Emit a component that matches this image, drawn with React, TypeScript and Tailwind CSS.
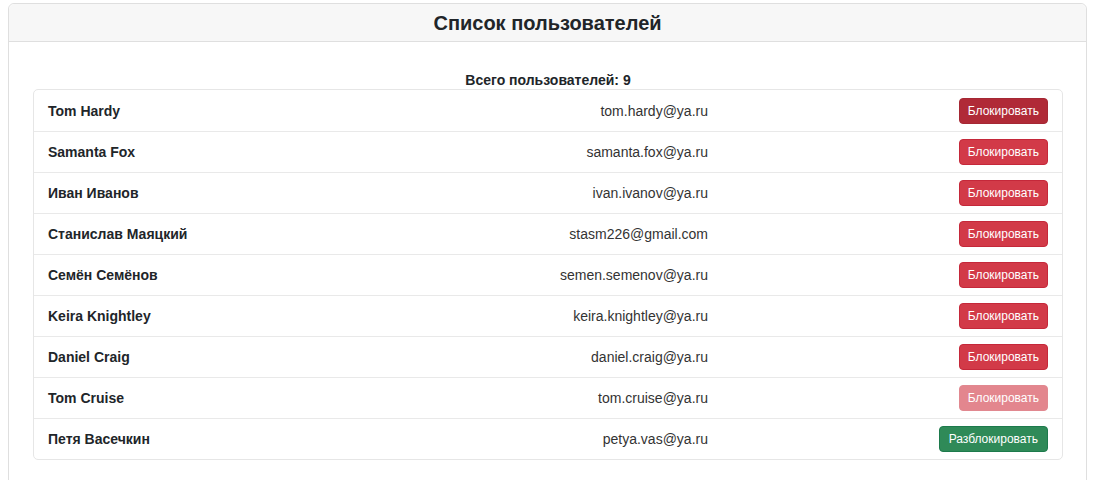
import React from 'react';

type User = {
  id: number;
  name: string;
  email: string;
  blocked: boolean;
  state?: 'active' | 'disabled';
};

const users: User[] = [
  { id: 1, name: 'Tom Hardy', email: 'tom.hardy@ya.ru', blocked: false, state: 'active' },
  { id: 2, name: 'Samanta Fox', email: 'samanta.fox@ya.ru', blocked: false },
  { id: 3, name: 'Иван Иванов', email: 'ivan.ivanov@ya.ru', blocked: false },
  { id: 4, name: 'Станислав Маяцкий', email: 'stasm226@gmail.com', blocked: false },
  { id: 5, name: 'Семён Семёнов', email: 'semen.semenov@ya.ru', blocked: false },
  { id: 6, name: 'Keira Knightley', email: 'keira.knightley@ya.ru', blocked: false },
  { id: 7, name: 'Daniel Craig', email: 'daniel.craig@ya.ru', blocked: false },
  { id: 8, name: 'Tom Cruise', email: 'tom.cruise@ya.ru', blocked: false, state: 'disabled' },
  { id: 9, name: 'Петя Васечкин', email: 'petya.vas@ya.ru', blocked: true },
];

function ActionButton({ user }: { user: User }) {
  if (user.blocked) {
    return (
      <button className="rounded-[4px] border border-[#1d7a4c] bg-[#2f8a58] px-[9px] py-[4px] text-xs leading-4 text-white">
        Разблокировать
      </button>
    );
  }
  const cls =
    user.state === 'active'
      ? 'border-[#a52834] bg-[#b02a37]'
      : user.state === 'disabled'
        ? 'border-[#e18890] bg-[#e3868e]'
        : 'border-[#c5283a] bg-[#d23a48]';
  return (
    <button className={`rounded-[4px] border px-2 py-[4px] text-xs leading-4 text-white ${cls}`}>
      Блокировать
    </button>
  );
}

export default function App() {
  return (
    <div
      className="min-h-[480px] bg-white pl-2 pr-[6px] pt-[3px] text-[#212529]"
      style={{ fontFamily: '"Liberation Sans", Arial, sans-serif' }}
    >
      <div className="min-h-[490px] rounded-[6px] border border-[#dfdfdf]">
        {/* Header */}
        <div className="flex h-[38px] items-center justify-center rounded-t-[6px] border-b border-[#dfdfdf] bg-[#f7f7f7]">
          <h1 className="text-[20px] font-bold leading-6">Список пользователей</h1>
        </div>

        {/* Body */}
        <div className="pl-6 pr-[23px] pt-[28px]">
          <p className="h-[19px] text-center text-sm font-bold leading-5">
            Всего пользователей: {users.length}
          </p>
          <ul className="rounded-[5px] border border-[#e6e6e6]">
            {users.map((user, i) => (
              <li
                key={user.id}
                className={`grid h-[41px] grid-cols-[1fr_1fr_340px] items-center px-[14px] ${
                  i > 0 ? 'border-t border-[#e9e9e9]' : 'h-[40px]'
                }`}
              >
                <span className="text-sm font-bold">{user.name}</span>
                <span className="text-right text-sm text-[#333]">{user.email}</span>
                <div className="flex justify-end">
                  <ActionButton user={user} />
                </div>
              </li>
            ))}
          </ul>
        </div>
      </div>
    </div>
  );
}
